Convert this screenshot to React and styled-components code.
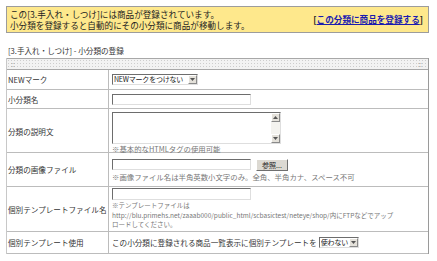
import styled, { createGlobalStyle } from "styled-components";

const GlobalStyle = createGlobalStyle`
  body {
    margin: 0;
    background: #fff;
    font-family: "Noto Sans CJK JP", "Noto Sans", sans-serif;
    color: #333;
  }
`;

const Page = styled.div`
  padding: 6px 8px 0 6px;
  width: 423px;
`;

const Notice = styled.div`
  display: flex;
  justify-content: space-between;
  align-items: center;
  height: 27px;
  box-sizing: border-box;
  padding: 0 5px 0 3px;
  border: 1px solid #9c9c9c;
  background: #fee88c;
  font-size: 8.6px;
  line-height: 10.5px;
  color: #222;
`;

const NoticeText = styled.p`
  margin: 0;
  white-space: nowrap;
`;

const RegisterLink = styled.span`
  white-space: nowrap;
  font-weight: bold;
  font-size: 8.6px;

  a {
    color: #1b1bb0;
    text-decoration: underline;
  }
`;

const Crumb = styled.div`
  margin-top: 12px;
  padding-left: 2px;
  font-size: 7.6px;
  line-height: 12px;
  color: #333;
`;

const Table = styled.div`
  margin-top: 1px;
  border-left: 1px solid #c8c8c8;
  border-right: 1px solid #9a9a9a;
  font-size: 7.6px;
  color: #333;
`;

const HeadBar = styled.div`
  display: flex;
  justify-content: space-between;
  align-items: center;
  height: 10px;
  padding: 0 6px 0 4px;
  border-top: 1px solid #a8a8a8;
  border-bottom: 1px solid #a8a8a8;
  background-color: #f2f2f2;
  background-image: radial-gradient(#cdcdcd 35%, transparent 40%);
  background-size: 3px 3px;
  font-size: 7px;
  line-height: 10px;
  color: #999;
`;

const Row = styled.div`
  display: grid;
  grid-template-columns: 102px 1fr;
  height: ${(p) => p.$h}px;
  border-bottom: 1px solid #bcbcbc;
`;

const Label = styled.div`
  display: flex;
  align-items: center;
  padding-left: 1px;
  border-right: 1px solid #bcbcbc;
  white-space: nowrap;
`;

const Value = styled.div`
  display: flex;
  flex-direction: column;
  justify-content: ${(p) => (p.$top ? "flex-start" : "center")};
  align-items: flex-start;
  padding: ${(p) => (p.$top ? `${p.$top}px` : "0")} 0 0 3px;
  white-space: nowrap;
`;

const Line = styled.div`
  display: flex;
  align-items: center;
  gap: ${(p) => p.$gap || 0}px;
`;

const TextBox = styled.div`
  box-sizing: border-box;
  width: ${(p) => p.$w}px;
  height: ${(p) => p.$h || 11}px;
  background: #fff;
  border: 1px solid;
  border-color: #6d6d6d #dedede #dedede #6d6d6d;
`;

const Area = styled.div`
  box-sizing: border-box;
  display: flex;
  justify-content: flex-end;
  width: 169px;
  height: 32px;
  background: #fff;
  border: 1px solid;
  border-color: #6d6d6d #dedede #dedede #6d6d6d;
`;

const ScrollTrack = styled.div`
  display: flex;
  flex-direction: column;
  justify-content: space-between;
  width: 9px;
  background: #f4f3ef;
`;

const ArrowBtn = styled.div`
  display: flex;
  align-items: center;
  justify-content: center;
  flex: none;
  width: 9px;
  height: 9px;
  box-sizing: border-box;
  background: #e4e1da;
  border: 1px solid;
  border-color: #fff #8a8a8a #8a8a8a #fff;
`;

const Select = styled.div`
  display: flex;
  align-items: center;
  box-sizing: border-box;
  width: ${(p) => p.$w}px;
  height: 11px;
  padding-left: 1px;
  background: #fff;
  border: 1px solid;
  border-color: #6d6d6d #dedede #dedede #6d6d6d;
  font-size: 7px;
  color: #222;
`;

const SelectText = styled.span`
  flex: 1;
  overflow: hidden;
  line-height: 9px;
  letter-spacing: -0.2px;
`;

const Browse = styled.div`
  box-sizing: border-box;
  height: 12px;
  padding: 0 5px;
  line-height: 10px;
  font-size: 7px;
  background: #dcd9d2;
  border: 1px solid;
  border-color: #fff #6f6f6f #6f6f6f #fff;
  color: #222;
`;

const Note = styled.div`
  font-size: ${(p) => p.$size || 7.4}px;
  line-height: ${(p) => p.$lh || 9}px;
  color: #777;
  margin-top: ${(p) => p.$mt || 0}px;
`;

const Tri = ({ up }) => (
  <svg width="5" height="3" viewBox="0 0 5 3">
    <path d={up ? "M0 3 L2.5 0 L5 3 Z" : "M0 0 L5 0 L2.5 3 Z"} fill="#555" />
  </svg>
);

const Drop = () => (
  <ArrowBtn>
    <Tri />
  </ArrowBtn>
);

export default function App() {
  return (
    <Page>
      <GlobalStyle />
      <Notice>
        <NoticeText>
          この[3.手入れ・しつけ]には商品が登録されています。
          <br />
          小分類を登録すると自動的にその小分類に商品が移動します。
        </NoticeText>
        <RegisterLink>
          [<a href="#">この分類に商品を登録する</a>]
        </RegisterLink>
      </Notice>

      <Crumb>[3.手入れ・しつけ] - 小分類の登録</Crumb>

      <Table>
        <HeadBar>
          <span>::</span>
          <span>::</span>
        </HeadBar>

        <Row $h={19}>
          <Label>NEWマーク</Label>
          <Value>
            <Select $w={86}>
              <SelectText>NEWマークをつけない</SelectText>
              <Drop />
            </Select>
          </Value>
        </Row>

        <Row $h={18}>
          <Label>小分類名</Label>
          <Value>
            <TextBox $w={139} />
          </Value>
        </Row>

        <Row $h={43}>
          <Label>分類の説明文</Label>
          <Value $top={3}>
            <Area>
              <ScrollTrack>
                <ArrowBtn>
                  <Tri up />
                </ArrowBtn>
                <ArrowBtn>
                  <Tri />
                </ArrowBtn>
              </ScrollTrack>
            </Area>
            <Note>※基本的なHTMLタグの使用可能</Note>
          </Value>
        </Row>

        <Row $h={33}>
          <Label>分類の画像ファイル</Label>
          <Value>
            <Line $gap={5}>
              <TextBox $w={139} />
              <Browse>参照...</Browse>
            </Line>
            <Note $mt={1}>※画像ファイル名は半角英数小文字のみ。全角、半角カナ、スペース不可</Note>
          </Value>
        </Row>

        <Row $h={44}>
          <Label>個別テンプレートファイル名</Label>
          <Value $top={1}>
            <TextBox $w={139} $h={12} />
            <Note $mt={1} $size={6.5} $lh={9.5}>
              ※テンプレートファイルは
              <br />
              http://blu.primehs.net/zaaab000/public_html/scbasictest/neteye/shop/内にFTPなどでアップ
              <br />
              ロードしてください。
            </Note>
          </Value>
        </Row>

        <Row $h={21}>
          <Label>個別テンプレート使用</Label>
          <Value>
            <Line $gap={2}>
              <span>この小分類に登録される商品一覧表示に個別テンプレートを</span>
              <Select $w={40}>
                <SelectText>使わない</SelectText>
                <Drop />
              </Select>
            </Line>
          </Value>
        </Row>
      </Table>
    </Page>
  );
}
